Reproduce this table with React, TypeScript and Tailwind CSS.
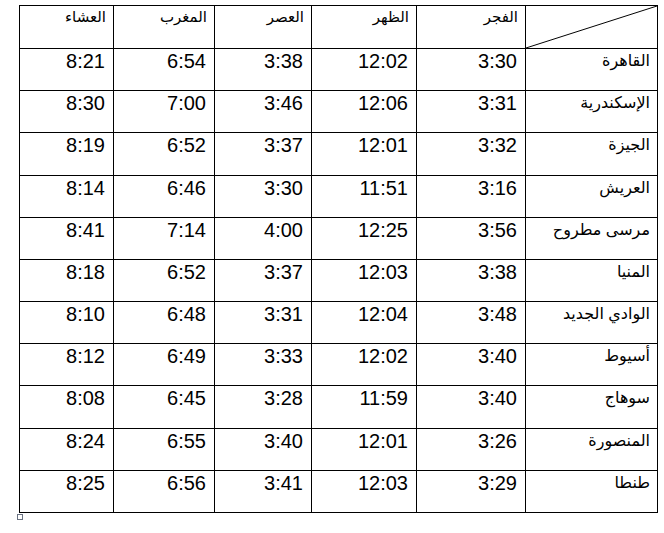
const headers = ["الفجر", "الظهر", "العصر", "المغرب", "العشاء"]

const rows: [string, string, string, string, string, string][] = [
  ["القاهرة", "3:30", "12:02", "3:38", "6:54", "8:21"],
  ["الإسكندرية", "3:31", "12:06", "3:46", "7:00", "8:30"],
  ["الجيزة", "3:32", "12:01", "3:37", "6:52", "8:19"],
  ["العريش", "3:16", "11:51", "3:30", "6:46", "8:14"],
  ["مرسى مطروح", "3:56", "12:25", "4:00", "7:14", "8:41"],
  ["المنيا", "3:38", "12:03", "3:37", "6:52", "8:18"],
  ["الوادي الجديد", "3:48", "12:04", "3:31", "6:48", "8:10"],
  ["أسيوط", "3:40", "12:02", "3:33", "6:49", "8:12"],
  ["سوهاج", "3:40", "11:59", "3:28", "6:45", "8:08"],
  ["المنصورة", "3:26", "12:01", "3:40", "6:55", "8:24"],
  ["طنطا", "3:29", "12:03", "3:41", "6:56", "8:25"],
]

const font = { fontFamily: '"Liberation Sans", Arial, "DejaVu Sans", sans-serif' }

export default function App() {
  return (
    <div className="w-[664px] h-[533px] bg-white overflow-hidden" style={font}>
      <div className="pt-[5px] pl-[19px]">
        <div
          dir="rtl"
          className="w-[639px] bg-black p-px gap-px grid grid-cols-[131px_108px_104px_96px_100px_93px] grid-rows-[42px_41px_41px_42px_41px_41px_41px_41px_41px_42px_41px_41px]"
        >
          {/* corner cell with the diagonal */}
          <div className="relative bg-white">
            <svg className="absolute inset-0 w-full h-full" preserveAspectRatio="none" viewBox="0 0 100 100">
              <line x1="-1" y1="101" x2="101" y2="-1" stroke="#000" strokeWidth="1" vectorEffect="non-scaling-stroke" />
            </svg>
          </div>
          {headers.map((h) => (
            <div key={h} className="bg-white pr-[7px] pt-[1px] text-[15px] leading-[20px] text-black">
              {h}
            </div>
          ))}

          {rows.map((r) => (
            <>
              <div key={r[0]} className="bg-white pr-[7px] pt-[1px] text-[16px] leading-[22px] text-black">
                {r[0]}
              </div>
              {r.slice(1).map((t, i) => (
                <div key={r[0] + i} className="bg-white pr-[8px] pt-px text-[20px] leading-[23px] text-black">
                  {t}
                </div>
              ))}
            </>
          ))}
        </div>
        <div className="-ml-[2px] mt-px w-[6px] h-[6px] border border-gray-500 bg-white" />
      </div>
    </div>
  )
}
